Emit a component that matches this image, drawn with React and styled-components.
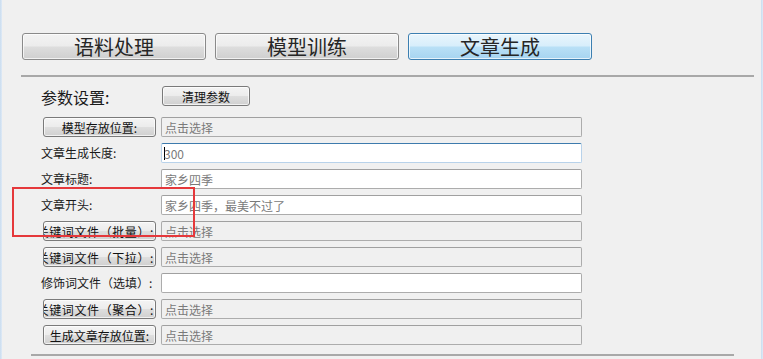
import React from "react";
import styled, { createGlobalStyle } from "styled-components";

const Global = createGlobalStyle`
    html, body {
        margin:0;
        padding:0;
        background:#f0f0f0;
        overflow:hidden;
    }
    body {
        font-family:"Noto Sans CJK SC","Noto Sans",sans-serif;
        color:#1a1a1a;
    }
`;

const Window = styled.div`
    width:763px;
    height:359px;
    display:flex;
    background:#f0f0f0;
    overflow:hidden;
    position:relative;
`;
const Edge = styled.div`
    width:2px;
    flex:none;
    background:linear-gradient(to right,#c9dcef,#dfeaf6);
`;
const Content = styled.div`
    flex:1;
    padding-top:33px;
    display:flex;
    flex-direction:column;
`;
const TabBar = styled.div`
    display:flex;
    gap:9px;
    padding-left:20px;
`;
const Tab = styled.button`
    width:184px;
    height:27px;
    padding:0;
    font-family:inherit;
    font-size:20px;
    line-height:25px;
    color:#262626;
    border-radius:3px;
    border:1px solid ${p => (p.$active ? "#3c7fb1" : "#8a8a8a")};
    background:${p => (p.$active
        ? "linear-gradient(#e9f5fc 0%,#d7eefb 48%,#b9e0f6 52%,#a6d4f0 100%)"
        : "linear-gradient(#f3f3f3 0%,#ececec 48%,#dddddd 52%,#cfcfcf 100%)")};
    box-shadow:inset 0 0 0 1px rgba(255,255,255,0.7);
`;
const Divider = styled.div`
    height:0;
    border-top:2px solid #a8a8a8;
    margin:${p => p.$top}px ${p => p.$right}px 0 ${p => p.$left}px;
`;
const Form = styled.div`
    padding-left:39px;
    display:flex;
    flex-direction:column;
`;
const ParamRow = styled.div`
    display:flex;
    align-items:center;
    height:20px;
    margin-top:9px;
    margin-bottom:11px;
`;
const SectionLabel = styled.span`
    width:121px;
    font-size:16px;
    line-height:20px;
    margin-top:2px;
`;
const WinButton = styled.button`
    width:${p => p.$w}px;
    height:20px;
    padding:0;
    margin-left:${p => p.$ml || 0}px;
    display:flex;
    align-items:center;
    justify-content:${p => (p.$clip ? "flex-end" : "center")};
    overflow:hidden;
    white-space:nowrap;
    font-family:inherit;
    font-size:12px;
    color:#111;
    border-radius:3px;
    border:1px solid #7a7a7a;
    background:linear-gradient(#f4f4f4 0%,#ececec 48%,#dedede 52%,#d0d0d0 100%);
    box-shadow:inset 0 0 0 1px rgba(255,255,255,0.7);
`;
const BtnText = styled.span`
    flex:none;
    letter-spacing:${p => (p.$clip ? 0.6 : 0)}px;
    padding-right:${p => (p.$clip ? 1 : 0)}px;
`;
const Rows = styled.div`
    display:flex;
    flex-direction:column;
    gap:6px;
`;
const Row = styled.div`
    display:flex;
    align-items:center;
    height:20px;
`;
const LabelCell = styled.div`
    width:120px;
    flex:none;
    display:flex;
    align-items:center;
`;
const Label = styled.span`
    font-size:12px;
    line-height:20px;
    white-space:nowrap;
`;
const Field = styled.div`
    width:421px;
    height:20px;
    box-sizing:border-box;
    padding-left:3px;
    display:flex;
    align-items:center;
    font-size:12px;
    color:#7a7a7a;
    white-space:nowrap;
    border-radius:2px;
    border:1px solid ${p => (p.$focus ? "#b8d2ea" : "#acacac")};
    border-top-color:${p => (p.$focus ? "#3d7bad" : "#a0a0a0")};
    background:${p => (p.$disabled ? "#f0f0f0" : "#ffffff")};
`;
const Caret = styled.span`
    width:1px;
    height:13px;
    background:#000;
    margin-right:-1px;
    margin-left:-1px;
`;
const BottomText = styled.div`
    margin:1px 0 0 35px;
    font-size:14px;
    line-height:18px;
`;
const Marker = styled.div`
    position:absolute;
    left:12px;
    top:187px;
    width:179px;
    height:46px;
    border:2px solid #e5383b;
    pointer-events:none;
`;

const rows = [
    { kind: "button", text: "模型存放位置:", value: "点击选择", disabled: true },
    { kind: "label", text: "文章生成长度:", value: "300", focus: true },
    { kind: "label", text: "文章标题:", value: "家乡四季" },
    { kind: "label", text: "文章开头:", value: "家乡四季，最美不过了" },
    { kind: "button", text: "关键词文件（批量）:", value: "点击选择", disabled: true, clip: true },
    { kind: "button", text: "关键词文件（下拉）:", value: "点击选择", disabled: true, clip: true },
    { kind: "label", text: "修饰词文件（选填）:", value: "" },
    { kind: "button", text: "关键词文件（聚合）:", value: "点击选择", disabled: true, clip: true },
    { kind: "button", text: "生成文章存放位置:", value: "点击选择", disabled: true },
];

function FormRow({ row }) {
    return (
        <Row>
            <LabelCell>
                {row.kind === "button" ? (
                    <WinButton $w={113} $ml={2} $clip={row.clip}>
                        <BtnText $clip={row.clip}>{row.text}</BtnText>
                    </WinButton>
                ) : (
                    <Label>{row.text}</Label>
                )}
            </LabelCell>
            <Field $disabled={row.disabled} $focus={row.focus}>
                {row.focus && <Caret />}
                {row.value}
            </Field>
        </Row>
    );
}

export default function App() {
    return (
        <Window>
            <Global />
            <Edge />
            <Content>
                <TabBar>
                    <Tab>语料处理</Tab>
                    <Tab>模型训练</Tab>
                    <Tab $active>文章生成</Tab>
                </TabBar>
                <Divider $top={15} $left={19} $right={7} />
                <Form>
                    <ParamRow>
                        <SectionLabel>参数设置:</SectionLabel>
                        <WinButton $w={88}>清理参数</WinButton>
                    </ParamRow>
                    <Rows>
                        {rows.map(r => <FormRow key={r.text} row={r} />)}
                    </Rows>
                </Form>
                <Divider $top={9} $left={29} $right={27} />
                <BottomText>文件列表</BottomText>
            </Content>
            <Edge />
            <Marker />
        </Window>
    );
}
